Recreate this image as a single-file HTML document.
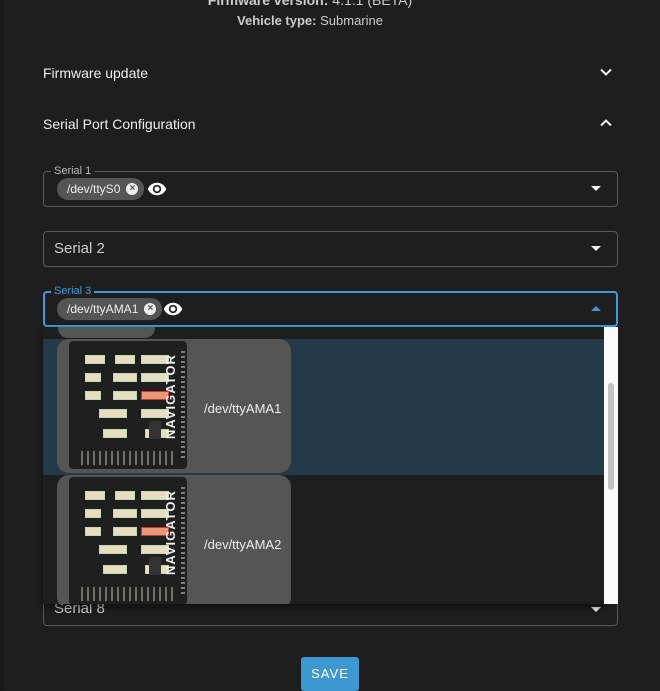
<!DOCTYPE html>
<html><head><style>
*{box-sizing:border-box;margin:0;padding:0}
body{width:660px;height:690px;background:#1e1e1e;font-family:"Liberation Sans",sans-serif;color:#ddd;position:relative;overflow:hidden}
.a{position:absolute}
.field{position:absolute;left:43px;width:575px;height:36px;border:1px solid #5a5a5a;border-radius:4px}
.chip{position:absolute;height:22px;background:#555;border-radius:11px;color:#eee;font-size:12px;line-height:22px;padding-left:10px;padding-right:24px;white-space:nowrap}
.x{position:absolute;right:6px;top:5px;width:12px;height:12px;border-radius:6px;background:#eee;color:#555;font-size:10px;line-height:12px;text-align:center;font-weight:bold}
.arrow{position:absolute;width:0;height:0;border-left:5px solid transparent;border-right:5px solid transparent;border-top:5px solid #eee}
.card{position:absolute;left:57px;width:234px;height:134px;background:#555;border-radius:12px}
.board{position:absolute;left:12px;top:2px;width:118px;height:128px;background:#1f1f1f;border-radius:4px}
.c{position:absolute;background:#e9dcc3;border:1px solid #bda;height:9px}
.nav{position:absolute;color:#eee;font-size:13px;font-weight:bold;transform:rotate(-90deg);transform-origin:left top;letter-spacing:1px}
</style></head><body>
<div class="a" style="left:0;top:0;width:4px;height:690px;background:#181818"></div>
<div class="a" style="left:0;top:-8px;width:620px;text-align:center;font-size:14px;font-weight:bold;color:#ccc">Firmware version: <span style="font-weight:normal">4.1.1 (BETA)</span></div>
<div class="a" style="left:0;top:13px;width:620px;text-align:center;font-size:13px;font-weight:bold;color:#ccc">Vehicle type: <span style="font-weight:normal">Submarine</span></div>
<div class="a" style="left:43px;top:65px;font-size:14px;color:#eee">Firmware update</div>
<svg class="a" style="left:600px;top:66px" width="12" height="12" viewBox="0 0 12 12"><path d="M1 3.5 L6 8.5 L11 3.5" stroke="#eee" stroke-width="2" fill="none"/></svg>
<div class="a" style="left:43px;top:116px;font-size:14px;color:#eee">Serial Port Configuration</div>
<svg class="a" style="left:600px;top:117px" width="12" height="12" viewBox="0 0 12 12"><path d="M1 8.5 L6 3.5 L11 8.5" stroke="#eee" stroke-width="2" fill="none"/></svg>

<div class="field" style="top:171px"></div>
<div class="a" style="left:51px;top:165px;background:#1e1e1e;padding:0 3px;font-size:11px;color:#bbb">Serial 1</div>
<div class="chip" style="left:57px;top:178px">/dev/ttyS0<span class="x">×</span></div>
<svg class="a" style="left:146px;top:179px" width="22" height="20" viewBox="0 0 24 24"><path fill="#fff" d="M12 4.5C7 4.5 2.7 7.6 1 12c1.7 4.4 6 7.5 11 7.5s9.3-3.1 11-7.5c-1.7-4.4-6-7.5-11-7.5zM12 17a5 5 0 1 1 0-10 5 5 0 0 1 0 10zm0-8a3 3 0 1 0 0 6 3 3 0 0 0 0-6z"/></svg>
<div class="arrow" style="left:591px;top:186px"></div>

<div class="field" style="top:231px"></div>
<div class="a" style="left:54px;top:240px;font-size:15px;color:#ccc">Serial 2</div>
<div class="arrow" style="left:591px;top:246px"></div>

<div class="field" style="top:291px;border:2px solid #3d9ad6"></div>
<div class="a" style="left:51px;top:285px;background:#1e1e1e;padding:0 3px;font-size:11px;color:#3d9ad6">Serial 3</div>
<div class="chip" style="left:57px;top:298px">/dev/ttyAMA1<span class="x">×</span></div>
<svg class="a" style="left:162px;top:299px" width="22" height="20" viewBox="0 0 24 24"><path fill="#fff" d="M12 4.5C7 4.5 2.7 7.6 1 12c1.7 4.4 6 7.5 11 7.5s9.3-3.1 11-7.5c-1.7-4.4-6-7.5-11-7.5zM12 17a5 5 0 1 1 0-10 5 5 0 0 1 0 10zm0-8a3 3 0 1 0 0 6 3 3 0 0 0 0-6z"/></svg>
<div class="a" style="left:591px;top:306px;width:0;height:0;border-left:5px solid transparent;border-right:5px solid transparent;border-bottom:5px solid #3d9ad6"></div>

<div class="field" style="top:590px"></div>
<div class="a" style="left:54px;top:600px;font-size:15px;color:#ccc">Serial 8</div>
<div class="arrow" style="left:591px;top:607px"></div>

<div class="a" style="left:43px;top:327px;width:562px;height:277px;background:#1e1e1e;overflow:hidden;box-shadow:0 3px 6px rgba(0,0,0,.5)">
 <div class="a" style="left:15px;top:0;width:97px;height:11px;background:#555;border-radius:0 0 10px 10px"></div>
 <div class="a" style="left:0;top:12px;width:562px;height:136px;background:#253a48"></div>
 <div class="card" style="left:14px;top:12px"><div class="board"></div></div>
 <div class="card" style="left:14px;top:148px"><div class="board"></div></div>
 <div class="a" style="left:161px;top:74px;font-size:13px;color:#eee">/dev/ttyAMA1</div>
 <div class="a" style="left:161px;top:210px;font-size:13px;color:#eee">/dev/ttyAMA2</div>
</div>
<div class="a" style="left:604px;top:327px;width:14px;height:277px;background:#fafafa"></div>
<div class="a" style="left:608px;top:383px;width:6px;height:107px;background:#c2c2c2;border-radius:3px"></div>

<div class="a" style="left:301px;top:657px;width:58px;height:34px;background:#3d97d1;border-radius:3px;color:#fff;font-size:13px;letter-spacing:1px;text-align:center;line-height:34px">SAVE</div>

<script>
document.querySelectorAll('.board').forEach(function(b){
 var h='';
 var cs=[[26,8,20],[56,8,20],[82,8,28],[26,26,16],[54,26,24],[82,26,28],[26,44,16],[54,44,24],[82,44,28],[40,62,28],[82,62,28],[44,82,24],[86,82,24]];
 cs.forEach(function(c,i){var red=(i==8);h+='<div class="c" style="left:'+(c[0]-10)+'px;top:'+(c[1]+6)+'px;width:'+c[2]+'px;'+(red?'background:#e8987a;border:1px solid #c33':'')+'"></div>';});
 h+='<div class="a" style="left:80px;top:80px;width:12px;height:18px;background:#333"></div>';
 h+='<div class="a" style="left:12px;top:110px;width:96px;height:14px;background:repeating-linear-gradient(90deg,#aa9 0 2px,transparent 2px 6px);opacity:.6"></div>';
 h+='<div class="a" style="left:112px;top:10px;width:4px;height:110px;background:repeating-linear-gradient(180deg,#aaa 0 2px,transparent 2px 5px);opacity:.7"></div>';
 h+='<div class="nav" style="left:94px;top:98px">NAVIGATOR</div>';
 b.innerHTML=h;
});
</script>
</body></html>
